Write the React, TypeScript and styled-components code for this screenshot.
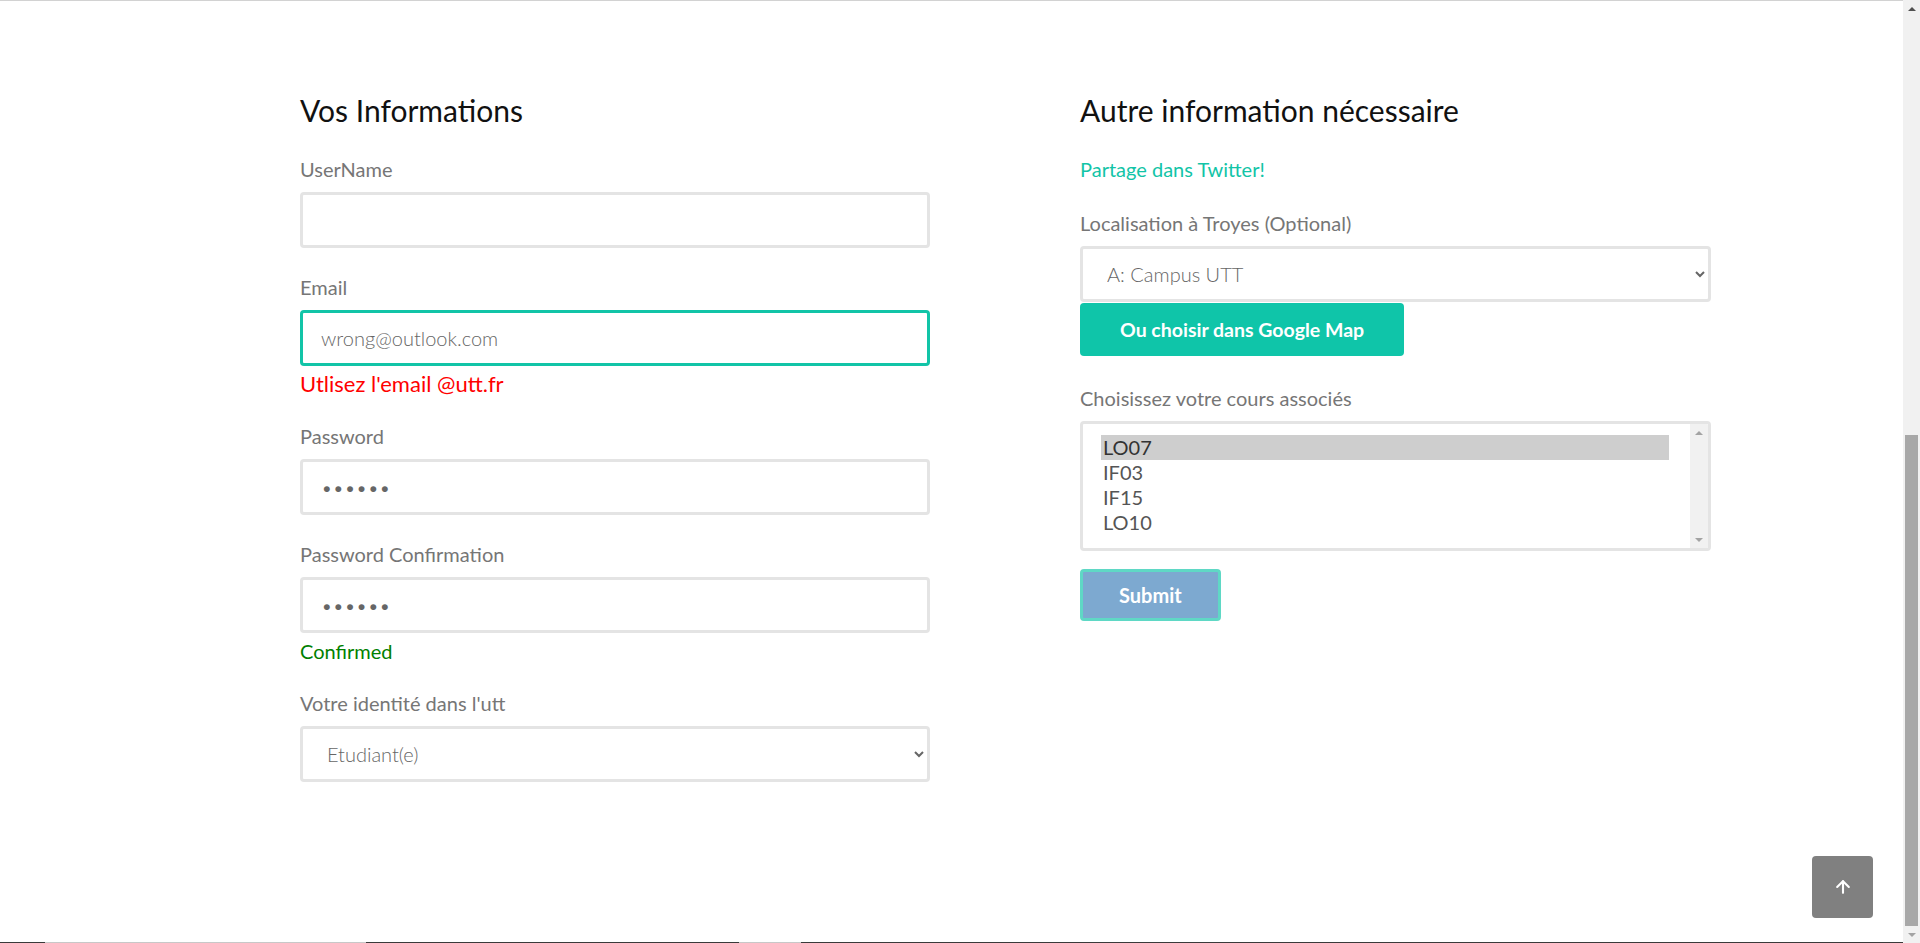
import React from 'react';
import styled, { createGlobalStyle } from 'styled-components';
import { ArrowUp } from 'lucide-react';

const GlobalStyle = createGlobalStyle`
  body {
    margin: 0;
    background: #fff;
    font-family: Lato, "Open Sans", sans-serif;
    color: #333;
  }
  * {
    box-sizing: border-box;
  }
`;

const Page = styled.div`
  display: flex;
  height: 100vh;
  overflow: hidden;
`;

const Content = styled.div`
  flex: 1;
  display: flex;
  flex-direction: column;
`;

const Main = styled.main`
  flex: 1;
  border-top: 1px solid #d2d2d2;
  padding: 93px 0 0 300px;
`;

const Columns = styled.div`
  display: grid;
  grid-template-columns: 630px 631px;
  column-gap: 150px;
  align-items: start;
`;

const Column = styled.section`
  display: flex;
  flex-direction: column;
`;

const Heading = styled.h3`
  margin: 0 0 30px;
  font-size: 30px;
  line-height: 33px;
  font-weight: 400;
  color: #111;
`;

const Group = styled.div<{ $gap?: number }>`
  display: flex;
  flex-direction: column;
  margin-bottom: ${(p) => (p.$gap ?? 27)}px;
`;

const Label = styled.label`
  font-size: 20px;
  line-height: 24px;
  color: #767676;
  margin-bottom: 11px;
`;

const Field = styled.input<{ $active?: boolean }>`
  height: 56px;
  border: 3px solid ${(p) => (p.$active ? '#12c4a7' : '#e4e4e4')};
  border-radius: 4px;
  padding: 0 18px;
  font-family: Lato, sans-serif;
  font-size: 20px;
  font-weight: 300;
  color: #666;
  background: #fff;
  outline: none;
`;

const Select = styled.select`
  height: 56px;
  border: 3px solid #e4e4e4;
  border-radius: 4px;
  padding: 0 10px 0 20px;
  font-family: Lato, sans-serif;
  font-size: 20px;
  font-weight: 300;
  color: #666;
  background: #fff;
  outline: none;
`;

const Message = styled.div<{ $tone: 'error' | 'ok' }>`
  margin-top: 5px;
  font-size: ${(p) => (p.$tone === 'error' ? 22 : 20)}px;
  line-height: 26px;
  color: ${(p) => (p.$tone === 'error' ? '#ff0000' : '#008000')};
`;

const ShareLink = styled.a`
  font-size: 20px;
  line-height: 24px;
  color: #12c4a7;
  text-decoration: none;
  margin-bottom: 30px;
`;

const MapButton = styled.button`
  align-self: flex-start;
  margin-top: 1px;
  height: 53px;
  padding: 0 40px;
  border: none;
  border-radius: 4px;
  background: #0fc5a9;
  color: #fff;
  font-family: Lato, sans-serif;
  font-size: 19.5px;
  font-weight: 700;
`;

const ListBox = styled.div`
  display: flex;
  height: 130px;
  border: 3px solid #e4e4e4;
  border-radius: 4px;
  background: #fff;
  overflow: hidden;
`;

const OptionList = styled.ul`
  flex: 1;
  margin: 0;
  padding: 11px 21px 11px 18px;
  list-style: none;
  font-size: 20px;
  line-height: 24px;
`;

const OptionItem = styled.li<{ $selected?: boolean }>`
  padding: 0 2px 1px;
  background: ${(p) => (p.$selected ? '#cecece' : 'transparent')};
  color: ${(p) => (p.$selected ? '#333' : '#555')};
`;

const Rail = styled.div<{ $width: number }>`
  width: ${(p) => p.$width}px;
  flex-shrink: 0;
  display: flex;
  flex-direction: column;
  background: #f1f1f1;
`;

const RailButton = styled.div`
  height: 17px;
  display: flex;
  align-items: center;
  justify-content: center;
`;

const RailArrow = styled.span<{ $dir: 'up' | 'down'; $dark?: boolean }>`
  width: 0;
  height: 0;
  border-left: 4px solid transparent;
  border-right: 4px solid transparent;
  ${(p) => (p.$dir === 'up' ? 'border-bottom' : 'border-top')}: 4px solid
    ${(p) => (p.$dark ? '#505050' : '#a3a3a3')};
`;

const RailTrack = styled.div`
  flex: 1;
  display: flex;
  flex-direction: column;
  justify-content: flex-end;
  padding: 0 2px;
`;

const RailThumb = styled.div`
  height: 491px;
  background: #a8a8a8;
`;

const SubmitButton = styled.button`
  align-self: flex-start;
  margin-top: 18px;
  height: 52px;
  padding: 0 36px;
  border: 3px solid #5fd8c5;
  border-radius: 4px;
  background: #7da9d0;
  color: #fff;
  font-family: Lato, sans-serif;
  font-size: 20px;
  font-weight: 700;
`;

const BackToTop = styled.button`
  position: fixed;
  right: 47px;
  bottom: 25px;
  width: 61px;
  height: 62px;
  border: none;
  border-radius: 4px;
  background: #808080;
  color: #fff;
  display: flex;
  align-items: center;
  justify-content: center;
`;

const FooterEdge = styled.div`
  height: 1px;
  flex-shrink: 0;
  background: linear-gradient(
    to right,
    #3a3a3a 0 45px,
    #c8c8c8 45px 366px,
    #3a3a3a 366px 739px,
    #c8c8c8 739px 801px,
    #3a3a3a 801px
  );
`;

const courses = ['LO07', 'IF03', 'IF15', 'LO10'];

export default function App() {
  return (
    <>
      <GlobalStyle />
      <Page>
        <Content>
          <Main>
            <Columns>
              <Column>
                <Heading>Vos Informations</Heading>
                <Group>
                  <Label>UserName</Label>
                  <Field type='text' defaultValue='' />
                </Group>
                <Group>
                  <Label>Email</Label>
                  <Field type='email' defaultValue='wrong@outlook.com' $active />
                  <Message $tone='error'>Utlisez l'email @utt.fr</Message>
                </Group>
                <Group>
                  <Label>Password</Label>
                  <Field type='password' defaultValue='123456' />
                </Group>
                <Group>
                  <Label>Password Confirmation</Label>
                  <Field type='password' defaultValue='123456' />
                  <Message $tone='ok'>Confirmed</Message>
                </Group>
                <Group>
                  <Label>Votre identité dans l'utt</Label>
                  <Select defaultValue='etudiant'>
                    <option value='etudiant'>Etudiant(e)</option>
                    <option value='enseignant'>Enseignant(e)</option>
                  </Select>
                </Group>
              </Column>
              <Column>
                <Heading>Autre information nécessaire</Heading>
                <ShareLink href='#'>Partage dans Twitter!</ShareLink>
                <Group $gap={30}>
                  <Label>Localisation à Troyes (Optional)</Label>
                  <Select defaultValue='A'>
                    <option value='A'>A: Campus UTT</option>
                    <option value='B'>B: Centre-ville</option>
                  </Select>
                  <MapButton type='button'>Ou choisir dans Google Map</MapButton>
                </Group>
                <Group $gap={0}>
                  <Label>Choisissez votre cours associés</Label>
                  <ListBox role='listbox' aria-multiselectable='true'>
                    <OptionList>
                      {courses.map((c) => (
                        <OptionItem key={c} role='option' $selected={c === 'LO07'}>
                          {c}
                        </OptionItem>
                      ))}
                    </OptionList>
                    <Rail $width={18}>
                      <RailButton>
                        <RailArrow $dir='up' />
                      </RailButton>
                      <RailTrack />
                      <RailButton>
                        <RailArrow $dir='down' />
                      </RailButton>
                    </Rail>
                  </ListBox>
                </Group>
                <SubmitButton type='submit'>Submit</SubmitButton>
              </Column>
            </Columns>
          </Main>
          <FooterEdge />
        </Content>
        <Rail $width={17} aria-hidden='true'>
          <RailButton>
            <RailArrow $dir='up' $dark />
          </RailButton>
          <RailTrack>
            <RailThumb />
          </RailTrack>
          <RailButton>
            <RailArrow $dir='down' />
          </RailButton>
        </Rail>
      </Page>
      <BackToTop type='button' aria-label='back to top'>
        <ArrowUp size={20} strokeWidth={2.5} />
      </BackToTop>
    </>
  );
}
